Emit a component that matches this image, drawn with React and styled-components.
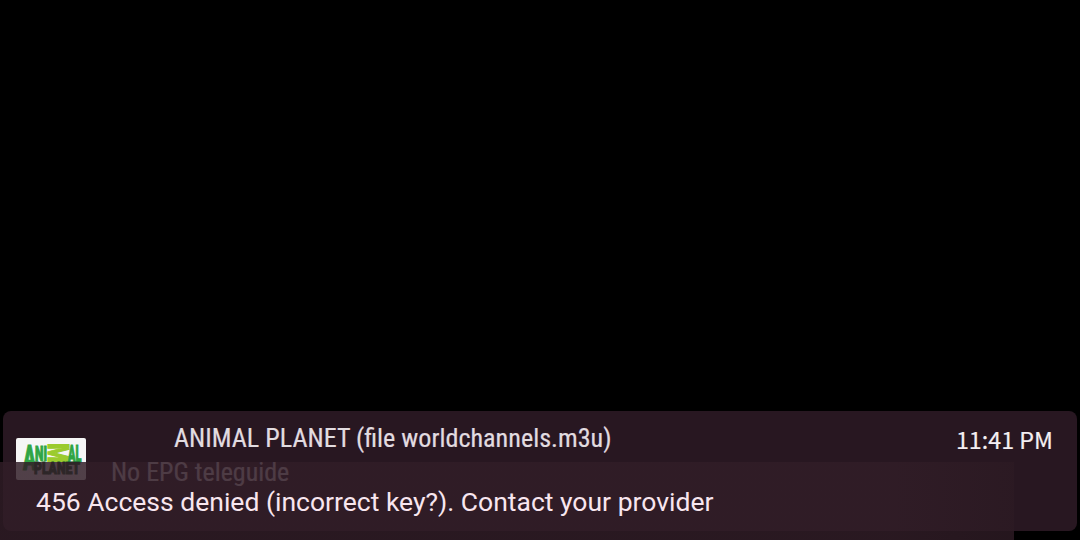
import React from 'react';
import styled, { createGlobalStyle } from 'styled-components';

const GlobalStyle = createGlobalStyle`
  * {
    box-sizing: border-box;
  }
  body {
    margin: 0;
    background: #000;
    overflow: hidden;
  }
`;

const PlayerLayout = styled.div`
  display: flex;
  flex-direction: column;
  justify-content: flex-end;
  position: relative;
  width: 100%;
  height: 100vh;
  padding: 0 3px 9px;
  background: #000;
`;
const InfoPanel = styled.div`
  display: flex;
  height: 120px;
  padding: 0 24px 0 13px;
  border-radius: 8px;
  background: #281721;
`;
const ChannelLogo = styled.svg`
  flex: none;
  width: 70px;
  height: 42px;
  margin-top: 27px;
`;
const ChannelInfo = styled.div`
  flex: 1;
  padding: 12px 0 0 25px;
`;
const CondensedText = styled.div`
  width: max-content;
  height: 30px;
  margin-bottom: 4px;
  padding-left: ${({ $indent }) => $indent || '0'};
  font-family: 'Roboto Condensed', Roboto, sans-serif;
  font-size: ${({ $size }) => $size || '26px'};
  font-stretch: 75%;
  line-height: 30px;
  white-space: nowrap;
  color: ${({ $color }) => $color || '#e2dce0'};
  -webkit-text-stroke: 0.2px currentColor;
`;
const Clock = styled.div`
  padding-top: 10px;
  font-family: 'Noto Sans CJK SC', sans-serif;
  font-size: 23.3px;
  line-height: 36px;
  white-space: nowrap;
  color: #f4eff3;
  -webkit-text-stroke: 0.2px currentColor;
`;
const Toast = styled.div`
  position: absolute;
  left: 0;
  bottom: 0;
  display: flex;
  align-items: center;
  width: 1014px;
  height: 78px;
  padding: 2px 36px 0;
  background: linear-gradient(90deg, rgba(49, 29, 39, 0.84) 88%, rgba(44, 26, 35, 0.84));
  font-family: Roboto, sans-serif;
  font-size: 26.5px;
  line-height: 30px;
  white-space: nowrap;
  color: #f8e6ef;
`;

const AnimalPlanetLogo = () => (
  <ChannelLogo viewBox="0 0 70 42">
    <rect width="70" height="42" rx="2" fill="#f6f6f6" />
    <g fontFamily="Roboto, sans-serif" fontWeight="900" fill="#2fa544" stroke="#2fa544" strokeWidth="1.1">
      <text x="7" y="32" fontSize="35" textLength="13" lengthAdjust="spacingAndGlyphs">
        A
      </text>
      <text x="19" y="23" fontSize="21" textLength="12" lengthAdjust="spacingAndGlyphs">
        NI
      </text>
      <text
        transform="translate(31.5 5.2) rotate(90)"
        fontSize="29"
        textLength="19.5"
        lengthAdjust="spacingAndGlyphs"
        fill="#9bcb2d"
        stroke="#9bcb2d"
      >
        M
      </text>
      <text x="52" y="24" fontSize="23" textLength="13.5" lengthAdjust="spacingAndGlyphs">
        AL
      </text>
      <text
        x="18"
        y="36"
        fontSize="16"
        textLength="46"
        lengthAdjust="spacingAndGlyphs"
        fill="#17542b"
        stroke="#17542b"
      >
        PLANET
      </text>
    </g>
  </ChannelLogo>
);

const App = () => {
  return (
    <>
      <GlobalStyle />
      <PlayerLayout>
        <InfoPanel>
          <AnimalPlanetLogo />
          <ChannelInfo>
            <CondensedText $indent="63px" $size="26.15px">
              ANIMAL PLANET (file worldchannels.m3u)
            </CondensedText>
            <CondensedText $color="#e2dce0">No EPG teleguide</CondensedText>
          </ChannelInfo>
          <Clock>11:41 PM</Clock>
        </InfoPanel>
        <Toast>456 Access denied (incorrect key?). Contact your provider</Toast>
      </PlayerLayout>
    </>
  );
};

export default App;
